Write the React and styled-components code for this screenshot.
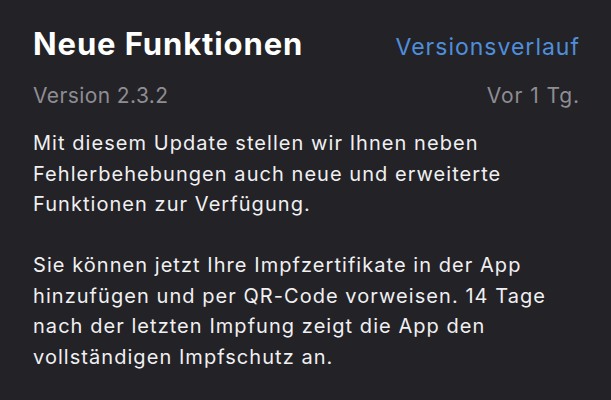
import React from 'react';
import styled, { createGlobalStyle } from 'styled-components';

const GlobalStyle = createGlobalStyle`
  html, body {
    margin: 0;
    padding: 0;
    background: #232226;
  }
  body {
    font-family: Inter, "Noto Sans", "Liberation Sans", sans-serif;
    -webkit-font-smoothing: antialiased;
  }
`;

const Page = styled.div`
  width: 611px;
  height: 400px;
  box-sizing: border-box;
  padding: 24px 31px 0 33px;
  background: #232226;
  overflow: hidden;
`;

const Row = styled.div`
  display: flex;
  justify-content: space-between;
  align-items: baseline;
  margin-top: ${(p) => p.$gap || 0}px;
`;

const Title = styled.h2`
  margin: 0;
  font-size: 31px;
  line-height: 40px;
  font-weight: 700;
  color: #ffffff;
  letter-spacing: 0.9px;
`;

const Link = styled.a`
  font-size: 23px;
  color: #4f8edc;
  text-decoration: none;
  cursor: pointer;
  letter-spacing: 1px;
`;

const Meta = styled.span`
  font-size: 21px;
  line-height: 40px;
  color: #8e8d93;
  letter-spacing: ${(p) => p.$spacing || 0.4}px;
`;

const Notes = styled.div`
  margin-top: 12px;
  display: flex;
  flex-direction: column;
  gap: 30.5px;
`;

const Paragraph = styled.p`
  margin: 0;
  font-size: 20px;
  line-height: 30.5px;
  color: #f0f0f2;
  letter-spacing: 1.05px;
`;

const notes = [
  [
    'Mit diesem Update stellen wir Ihnen neben',
    'Fehlerbehebungen auch neue und erweiterte',
    'Funktionen zur Verfügung.',
  ],
  [
    'Sie können jetzt Ihre Impfzertifikate in der App',
    'hinzufügen und per QR-Code vorweisen. 14 Tage',
    'nach der letzten Impfung zeigt die App den',
    'vollständigen Impfschutz an.',
  ],
];

export default function App() {
  return (
    <>
      <GlobalStyle />
      <Page>
        <Row>
          <Title>Neue Funktionen</Title>
          <Link>Versionsverlauf</Link>
        </Row>
        <Row $gap={12}>
          <Meta>Version 2.3.2</Meta>
          <Meta $spacing={0.9}>Vor 1 Tg.</Meta>
        </Row>
        <Notes>
          {notes.map((lines, i) => (
            <Paragraph key={i}>
              {lines.map((line, j) => (
                <React.Fragment key={j}>
                  {line}
                  {j < lines.length - 1 && <br />}
                </React.Fragment>
              ))}
            </Paragraph>
          ))}
        </Notes>
      </Page>
    </>
  );
}
